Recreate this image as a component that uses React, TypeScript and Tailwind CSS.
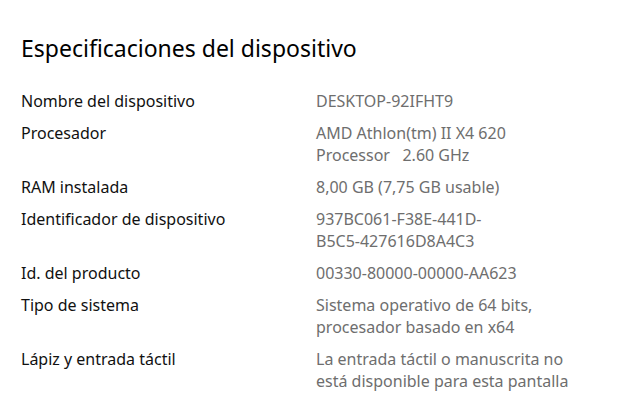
const specs: { label: string; value: string[] }[] = [
  { label: "Nombre del dispositivo", value: ["DESKTOP-92IFHT9"] },
  { label: "Procesador", value: ["AMD Athlon(tm) II X4 620", "Processor   2.60 GHz"] },
  { label: "RAM instalada", value: ["8,00 GB (7,75 GB usable)"] },
  { label: "Identificador de dispositivo", value: ["937BC061-F38E-441D-", "B5C5-427616D8A4C3"] },
  { label: "Id. del producto", value: ["00330-80000-00000-AA623"] },
  { label: "Tipo de sistema", value: ["Sistema operativo de 64 bits,", "procesador basado en x64"] },
  { label: "Lápiz y entrada táctil", value: ["La entrada táctil o manuscrita no", "está disponible para esta pantalla"] },
];

export default function App() {
  return (
    <div className="w-[640px] h-[404px] bg-white overflow-hidden font-['Noto_Sans',sans-serif] pl-[21px] pt-[32px]">
      <h1 className="text-[23px] leading-[32px] text-black font-normal">Especificaciones del dispositivo</h1>
      <div className="mt-[26px] flex flex-col gap-[10px]">
        {specs.map((s) => (
          <div key={s.label} className="flex text-[16px] leading-[22px]">
            <div className="w-[295px] shrink-0 text-[#111]">{s.label}</div>
            <div className="text-[#6e6e6e] whitespace-pre">
              {s.value.map((v) => (
                <div key={v}>{v}</div>
              ))}
            </div>
          </div>
        ))}
      </div>
    </div>
  );
}
